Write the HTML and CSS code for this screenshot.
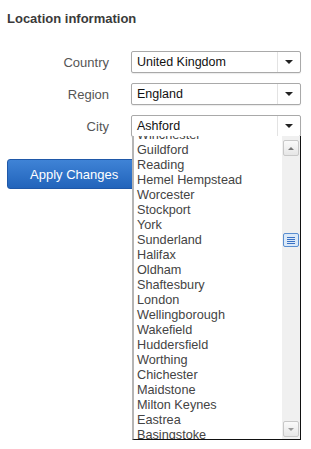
FILE: index.html
```html
<!DOCTYPE html>
<html lang="en">
<head>
  <meta charset="utf-8">
  <title>Location information</title>
  <link rel="stylesheet" href="styles.css">
</head>
<body>
  <div class="panel">
    <h2>Location information</h2>

    <div class="form">
      <label>Country</label>
      <div class="select"><span>United Kingdom</span><i class="arrow"></i></div>
      <label>Region</label>
      <div class="select"><span>England</span><i class="arrow"></i></div>
      <label>City</label>
      <div class="select"><span>Ashford</span><i class="arrow"></i></div>
    </div>

    <button class="btn">Apply Changes</button>

    <!-- open city dropdown -->
    <div class="dropdown">
      <ul class="options">
        <li>Winchester</li>
        <li>Guildford</li>
        <li>Reading</li>
        <li>Hemel Hempstead</li>
        <li>Worcester</li>
        <li>Stockport</li>
        <li>York</li>
        <li>Sunderland</li>
        <li>Halifax</li>
        <li>Oldham</li>
        <li>Shaftesbury</li>
        <li>London</li>
        <li>Wellingborough</li>
        <li>Wakefield</li>
        <li>Huddersfield</li>
        <li>Worthing</li>
        <li>Chichester</li>
        <li>Maidstone</li>
        <li>Milton Keynes</li>
        <li>Eastrea</li>
        <li>Basingstoke</li>
      </ul>
      <div class="scrollbar">
        <span class="sb-btn up"></span>
        <span class="sb-track">
          <span class="sb-thumb"><b></b><b></b><b></b><b></b></span>
        </span>
        <span class="sb-btn down"></span>
      </div>
    </div>
  </div>
</body>
</html>
```

FILE: styles.css
```css
* { box-sizing: border-box; margin: 0; padding: 0; }
html, body { height: 100%; }
body {
  font-family: 'Liberation Sans', Arial, sans-serif;
  background: #fff;
  color: #444;
}
.panel {
  position: relative;
  min-height: 100%;
  padding: 11px 7px;
}
h2 {
  font-size: 13px;
  font-weight: bold;
  color: #3a3a3a;
  line-height: 15px;
}
.form {
  display: grid;
  grid-template-columns: 102px 170px;
  column-gap: 22px;
  row-gap: 10px;
  align-items: center;
  margin-top: 25px;
}
.form label {
  text-align: right;
  font-size: 13px;
  color: #555;
}
.select {
  height: 22px;
  border: 1px solid #a9a9a9;
  border-radius: 2px;
  background: #fff;
  box-shadow: 0 1px 1px rgba(0,0,0,.08);
  display: flex;
  align-items: center;
  font-size: 12.5px;
  color: #111;
}
.select span {
  flex: 1;
  padding-left: 5px;
}
.select .arrow {
  width: 23px;
  height: 100%;
  border-left: 1px solid #e3e3e3;
  position: relative;
}
.select .arrow::after {
  content: '';
  position: absolute;
  left: 7px; top: 8px;
  border-left: 4px solid transparent;
  border-right: 4px solid transparent;
  border-top: 4px solid #222;
}
.btn {
  margin-top: 22px;
  width: 133px;
  height: 30px;
  border: 1px solid #1f58a8;
  border-radius: 3px;
  background: linear-gradient(#3f83d6, #2264bb);
  color: #fff;
  font-family: inherit;
  font-size: 13px;
  text-align: left;
  padding-left: 22px;
}
/* list drops over the button */
.dropdown {
  position: absolute;
  left: 132px; top: 136px;
  width: 169px; height: 304px;
  background: #fff;
  border-left: 2px solid #b5b5b5;
  border-right: 1px solid #111;
  border-bottom: 1px solid #111;
  overflow: hidden;
  display: flex;
}
.options {
  list-style: none;
  flex: 1;
  margin-top: -8px;
  padding-left: 3px;
  font-size: 12.7px;
  line-height: 15px;
  color: #444;
}
.scrollbar {
  width: 18px;
  background: #f0f0f0;
  display: flex;
  flex-direction: column;
  padding: 4px 1px 2px;
}
.sb-btn {
  height: 16px;
  border: 1px solid #c8c8c8;
  border-radius: 2px;
  background: linear-gradient(#fafafa, #e6e6e6);
  position: relative;
}
.sb-btn::after {
  content: '';
  position: absolute;
  left: 4px; top: 6px;
  border-left: 3px solid transparent;
  border-right: 3px solid transparent;
}
.sb-btn.up::after { border-bottom: 3px solid #777; }
.sb-btn.down::after { border-top: 3px solid #999; }
.sb-track {
  flex: 1;
  display: flex;
  flex-direction: column;
  padding-top: 77px;
}
.sb-thumb {
  height: 14px;
  border: 1px solid #5a8ed0;
  border-radius: 2px;
  background: #dbe9f8;
  display: flex;
  flex-direction: column;
  justify-content: center;
  gap: 1px;
  padding: 0 3px;
}
.sb-thumb b {
  height: 1px;
  background: #3b72c4;
}
```
